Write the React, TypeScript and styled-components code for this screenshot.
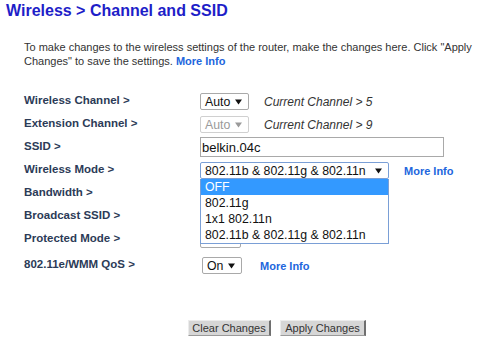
import React from "react";
import styled, { createGlobalStyle } from "styled-components";

const GlobalStyle = createGlobalStyle`
    html, body {
        margin: 0;
        padding: 0;
        background: #ffffff;
    }
    body {
        font-family: "Liberation Sans", Arial, sans-serif;
        color: #333333;
    }
`;

const modes = ["OFF", "802.11g", "1x1 802.11n", "802.11b & 802.11g & 802.11n"];

function Arrow({ disabled }: { disabled?: boolean }) {
    return (
        <ArrowIcon width="7" height="6" viewBox="0 0 7 6">
            <path d="M0 0.5 H7 L3.5 5.5 Z" fill={disabled ? "#9a9a9a" : "#111"} />
        </ArrowIcon>
    );
}

function App() {
    return (
        <Page>
            <GlobalStyle />
            <Title>Wireless &gt; Channel and SSID</Title>
            <Intro>
                To make changes to the wireless settings of the router, make the changes here. Click "Apply
                Changes" to save the settings. <MoreInfo>More Info</MoreInfo>
            </Intro>

            <Form>
                <Row $height={23}>
                    <Label>Wireless Channel &gt;</Label>
                    <Controls>
                        <Select $width={49}>
                            Auto <Arrow />
                        </Select>
                        <Note>Current Channel &gt; 5</Note>
                    </Controls>
                </Row>
                <Row $height={23}>
                    <Label>Extension Channel &gt;</Label>
                    <Controls>
                        <Select $width={49} $disabled>
                            Auto <Arrow disabled />
                        </Select>
                        <Note>Current Channel &gt; 9</Note>
                    </Controls>
                </Row>
                <Row $height={23}>
                    <Label>SSID &gt;</Label>
                    <Controls>
                        <TextBox>belkin.04c</TextBox>
                    </Controls>
                </Row>
                <Row $height={23}>
                    <Label>Wireless Mode &gt;</Label>
                    <Controls>
                        <DropWrap>
                            <Select $width={189} $focused>
                                802.11b &amp; 802.11g &amp; 802.11n <Arrow />
                            </Select>
                            <OptionList>
                                {modes.map((m, i) => (
                                    <OptionItem key={m} $active={i === 0}>
                                        {m}
                                    </OptionItem>
                                ))}
                            </OptionList>
                        </DropWrap>
                        <MoreInfo $gap={15}>More Info</MoreInfo>
                    </Controls>
                </Row>
                {/* these three selects sit under the open list, only their frames show */}
                <Row $height={23}>
                    <Label>Bandwidth &gt;</Label>
                    <Controls>
                        <Select $width={80} />
                    </Controls>
                </Row>
                <Row $height={23}>
                    <Label>Broadcast SSID &gt;</Label>
                    <Controls>
                        <Select $width={41} />
                    </Controls>
                </Row>
                <Row $height={26}>
                    <Label>Protected Mode &gt;</Label>
                    <Controls>
                        <Select $width={41} />
                    </Controls>
                </Row>
                <Row $height={23}>
                    <Label>802.11e/WMM QoS &gt;</Label>
                    <Controls $indent={2}>
                        <Select $width={40}>
                            On <Arrow />
                        </Select>
                        <MoreInfo $gap={18}>More Info</MoreInfo>
                    </Controls>
                </Row>
            </Form>

            <ButtonBar>
                <Button $width={83}>Clear Changes</Button>
                <Button $width={86}>Apply Changes</Button>
            </ButtonBar>
        </Page>
    );
}

export default App;

const Page = styled.div`
    width: 499px;
    height: 342px;
    overflow: hidden;
`;

const Title = styled.h1`
    margin: 0;
    padding: 2px 0 0 6px;
    color: #1e1ec8;
    font-size: 16px;
    font-weight: 700;
    line-height: 18px;
`;

const Intro = styled.p`
    margin: 20px 0 0 24px;
    width: 470px;
    font-size: 11px;
    line-height: 14px;
    color: #333;
`;

const MoreInfo = styled.span<{ $gap?: number }>`
    color: #2266dd;
    font-weight: 700;
    font-size: 11px;
    line-height: 14px;
    margin-left: ${(p) => p.$gap ?? 0}px;
`;

const Form = styled.div`
    margin-top: 21px;
    padding-left: 24px;
`;

const Row = styled.div<{ $height: number }>`
    display: grid;
    grid-template-columns: 176px 1fr;
    align-items: start;
    height: ${(p) => p.$height}px;
`;

const Label = styled.div`
    padding-top: 4px;
    font-size: 11.5px;
    line-height: 14px;
    font-weight: 700;
    color: #2c3b57;
`;

const Controls = styled.div<{ $indent?: number }>`
    display: flex;
    align-items: center;
    margin-top: 4px;
    padding-left: ${(p) => p.$indent ?? 0}px;
`;

const Select = styled.div<{ $width: number; $disabled?: boolean; $focused?: boolean }>`
    box-sizing: border-box;
    width: ${(p) => p.$width}px;
    height: 17px;
    display: flex;
    align-items: center;
    justify-content: space-between;
    padding: 0 6px 0 4px;
    border: 1px solid ${(p) => (p.$focused ? "#7a9fd6" : p.$disabled ? "#d0d0d0" : "#a9a9a9")};
    border-radius: 2px;
    background: #fff;
    font-size: 12.3px;
    color: ${(p) => (p.$disabled ? "#9a9a9a" : "#111")};
    white-space: nowrap;
`;

const ArrowIcon = styled.svg`
    flex: none;
    margin-left: 4px;
`;

const Note = styled.span`
    margin-left: 15px;
    font-size: 12px;
    font-style: italic;
    color: #333;
`;

const TextBox = styled.div`
    box-sizing: border-box;
    width: 244px;
    height: 20px;
    margin-top: -2px;
    padding: 0 1px;
    display: flex;
    align-items: center;
    border: 1px solid #a9a9a9;
    background: #fff;
    font-size: 13px;
    color: #111;
`;

const DropWrap = styled.div`
    position: relative;
`;

const OptionList = styled.div`
    position: absolute;
    top: 17px;
    left: 0;
    z-index: 2;
    box-sizing: border-box;
    width: 189px;
    background: #fff;
    border: 1px solid #7a9fd6;
    border-top: none;
`;

const OptionItem = styled.div<{ $active?: boolean }>`
    height: 16px;
    line-height: 16px;
    padding-left: 4px;
    font-size: 12.3px;
    white-space: nowrap;
    background: ${(p) => (p.$active ? "#3399ff" : "#fff")};
    color: ${(p) => (p.$active ? "#fff" : "#111")};
`;

const ButtonBar = styled.div`
    display: flex;
    gap: 9px;
    margin-top: 44px;
    padding-left: 188px;
`;

const Button = styled.div<{ $width: number }>`
    box-sizing: border-box;
    width: ${(p) => p.$width}px;
    height: 16px;
    display: flex;
    align-items: center;
    justify-content: center;
    background: #d6d6d6;
    border-top: 1px solid #ececec;
    border-left: 1px solid #ececec;
    border-right: 2px solid #6f6f6f;
    border-bottom: 1px solid #9a9a9a;
    font-size: 11px;
    color: #333;
`;
